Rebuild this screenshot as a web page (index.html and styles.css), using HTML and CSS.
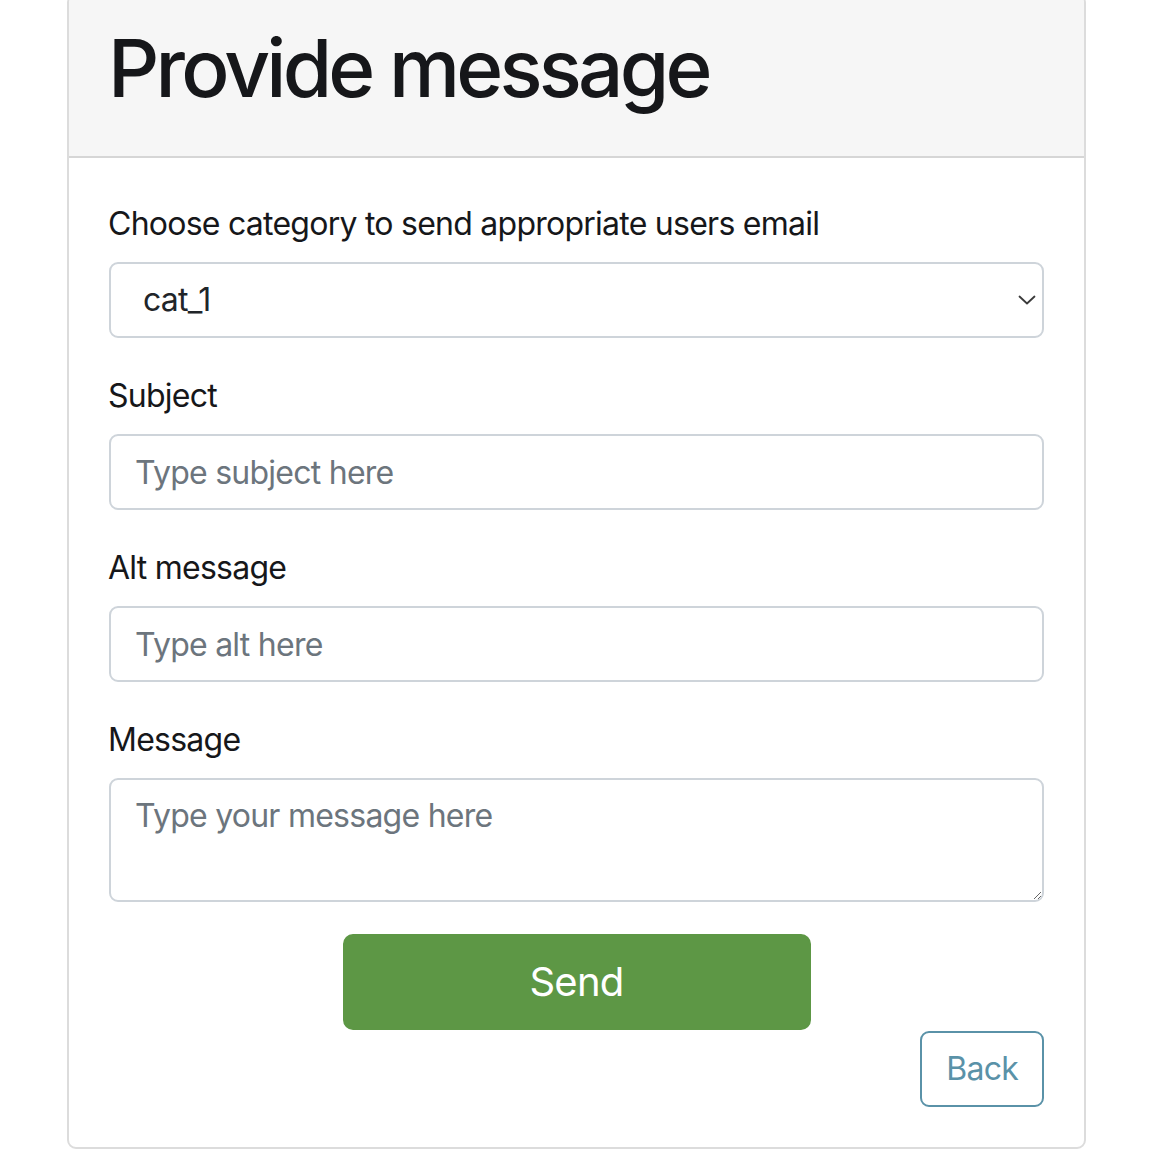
FILE: index.html
```html
<!DOCTYPE html>
<html lang="en">
<head>
<meta charset="utf-8">
<title>Provide message</title>
<link rel="stylesheet" href="styles.css">
</head>
<body>
<div class="card">
  <div class="card-header">
    <h1 class="title">Provide message</h1>
  </div>
  <div class="card-body">
    <form class="form">
      <div class="form-group">
        <label class="label" for="cat">Choose category to send appropriate users email</label>
        <div class="select-wrap">
          <select id="cat" class="form-control select">
            <option>cat_1</option>
          </select>
          <svg class="chevron" width="18" height="12" viewBox="0 0 18 12" aria-hidden="true">
            <path d="M1.5 2.5 L9 9.5 L16.5 2.5" fill="none" stroke="#3a3a3a" stroke-width="1.8" stroke-linecap="round" stroke-linejoin="round"/>
          </svg>
        </div>
      </div>
      <div class="form-group">
        <label class="label" for="subject">Subject</label>
        <input id="subject" class="form-control" type="text" placeholder="Type subject here">
      </div>
      <div class="form-group">
        <label class="label" for="alt">Alt message</label>
        <input id="alt" class="form-control" type="text" placeholder="Type alt here">
      </div>
      <div class="form-group">
        <label class="label" for="msg">Message</label>
        <textarea id="msg" class="form-control textarea" rows="2" placeholder="Type your message here"></textarea>
      </div>
      <div class="send-row">
        <button type="button" class="btn btn-send">Send</button>
      </div>
      <div class="back-row">
        <button type="button" class="btn btn-back">Back</button>
      </div>
    </form>
  </div>
</div>
</body>
</html>
```

FILE: styles.css
```css
html, body {
  margin: 0;
  padding: 0;
  background: #ffffff;
}

body {
  font-family: Inter, "Helvetica Neue", Arial, sans-serif;
  color: #212529;
  font-size: 32px;
  line-height: 1.5;
  letter-spacing: -0.75px;
}

.card {
  box-sizing: border-box;
  width: 1019px;
  margin: -6px 0 0 67px;
  border: 2px solid #dcdcdc;
  border-radius: 9px;
  background: #ffffff;
  overflow: hidden;
}

.card-header {
  background: #f6f6f6;
  border-bottom: 2px solid #d6d6d6;
  padding: 24px 40px 24px 40px;
}

.title {
  margin: 0 0 16px -1px;
  font-size: 80px;
  line-height: 1.2;
  font-weight: 500;
  color: #16171a;
  letter-spacing: -3.8px;
}

.card-body {
  padding: 40px 40px 40px 40px;
}

.form {
  display: flex;
  flex-direction: column;
}

.form-group {
  display: flex;
  flex-direction: column;
  margin-bottom: 32px;
}

.label {
  display: block;
  margin-bottom: 16px;
  padding-top: 2px;
  height: 46px;
  font-size: 32px;
  line-height: 48px;
  color: #16171a;
  margin-left: -1px;
}

.form-control {
  box-sizing: border-box;
  display: block;
  width: 100%;
  height: 76px;
  padding: 12px 24px;
  font-family: inherit;
  letter-spacing: inherit;
  font-size: 32px;
  line-height: 48px;
  color: #495057;
  background: #ffffff;
  border: 2px solid #ced4da;
  border-radius: 9px;
  outline: none;
  margin: 0;
}

.form-control::placeholder {
  color: #6c757d;
  opacity: 1;
}

.select-wrap {
  position: relative;
}

.select {
  -webkit-appearance: none;
  appearance: none;
  padding-left: 32px;
  color: #212529;
}

.chevron {
  position: absolute;
  right: 8px;
  top: 32px;
  pointer-events: none;
}

.textarea {
  height: 124px;
  resize: vertical;
}

.send-row {
  display: flex;
  justify-content: center;
}

.btn {
  font-family: inherit;
  letter-spacing: inherit;
  cursor: pointer;
  box-sizing: border-box;
}

.btn-send {
  width: 468px;
  height: 96px;
  font-size: 40px;
  line-height: 60px;
  padding: 16px 32px;
  color: #ffffff;
  background: #5d9745;
  border: 2px solid #5d9745;
  border-radius: 10px;
}

.back-row {
  display: flex;
  justify-content: flex-end;
  margin-top: 1px;
}

.btn-back {
  height: 76px;
  padding: 12px 24px;
  font-size: 32px;
  line-height: 48px;
  color: #5a92a8;
  background: #ffffff;
  border: 2px solid #5a92a8;
  border-radius: 9px;
}
```
